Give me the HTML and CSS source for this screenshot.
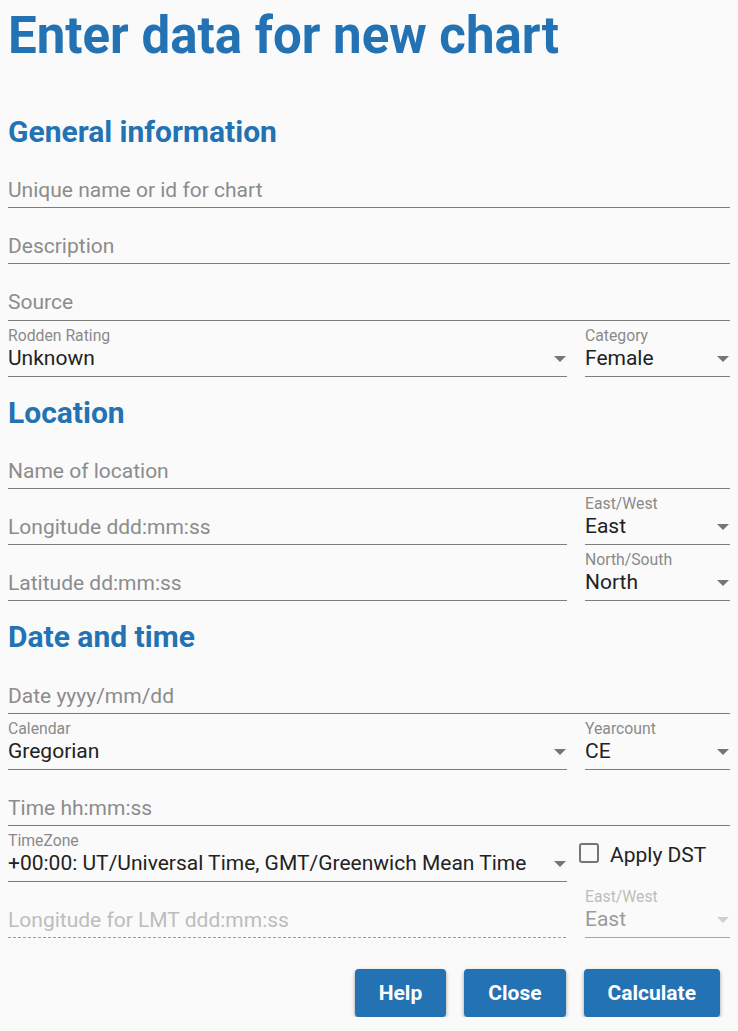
FILE: index.html
```html
<!DOCTYPE html>
<html lang="en">
<head>
<meta charset="utf-8">
<title>Enter data for new chart</title>
<link rel="stylesheet" href="styles.css">
</head>
<body>
<main class="page">
  <h1 class="title">Enter data for new chart</h1>

  <h2 class="section">General information</h2>
  <div class="field"><span class="placeholder">Unique name or id for chart</span></div>
  <div class="field"><span class="placeholder">Description</span></div>
  <div class="field"><span class="placeholder">Source</span></div>
  <div class="row">
    <div class="field select">
      <span class="label">Rodden Rating</span>
      <span class="value">Unknown</span>
      <svg class="arrow" width="12" height="6" viewBox="0 0 12 6"><path d="M0 0h12L6 6z"/></svg>
    </div>
    <div class="field select">
      <span class="label">Category</span>
      <span class="value">Female</span>
      <svg class="arrow" width="12" height="6" viewBox="0 0 12 6"><path d="M0 0h12L6 6z"/></svg>
    </div>
  </div>

  <h2 class="section">Location</h2>
  <div class="field"><span class="placeholder">Name of location</span></div>
  <div class="row">
    <div class="field"><span class="placeholder">Longitude ddd:mm:ss</span></div>
    <div class="field select">
      <span class="label">East/West</span>
      <span class="value">East</span>
      <svg class="arrow" width="12" height="6" viewBox="0 0 12 6"><path d="M0 0h12L6 6z"/></svg>
    </div>
  </div>
  <div class="row">
    <div class="field"><span class="placeholder">Latitude dd:mm:ss</span></div>
    <div class="field select">
      <span class="label">North/South</span>
      <span class="value">North</span>
      <svg class="arrow" width="12" height="6" viewBox="0 0 12 6"><path d="M0 0h12L6 6z"/></svg>
    </div>
  </div>

  <h2 class="section">Date and time</h2>
  <div class="field"><span class="placeholder">Date yyyy/mm/dd</span></div>
  <div class="row">
    <div class="field select">
      <span class="label">Calendar</span>
      <span class="value">Gregorian</span>
      <svg class="arrow" width="12" height="6" viewBox="0 0 12 6"><path d="M0 0h12L6 6z"/></svg>
    </div>
    <div class="field select">
      <span class="label">Yearcount</span>
      <span class="value">CE</span>
      <svg class="arrow" width="12" height="6" viewBox="0 0 12 6"><path d="M0 0h12L6 6z"/></svg>
    </div>
  </div>
  <div class="field"><span class="placeholder">Time hh:mm:ss</span></div>
  <div class="row">
    <div class="field select">
      <span class="label">TimeZone</span>
      <span class="value">+00:00: UT/Universal Time, GMT/Greenwich Mean Time</span>
      <svg class="arrow" width="12" height="6" viewBox="0 0 12 6"><path d="M0 0h12L6 6z"/></svg>
    </div>
    <label class="dst">
      <span class="checkbox"></span>
      <span class="dst-text">Apply DST</span>
    </label>
  </div>
  <div class="row">
    <div class="field disabled"><span class="placeholder">Longitude for LMT ddd:mm:ss</span></div>
    <div class="field select disabled">
      <span class="label">East/West</span>
      <span class="value">East</span>
      <svg class="arrow" width="12" height="6" viewBox="0 0 12 6"><path d="M0 0h12L6 6z"/></svg>
    </div>
  </div>

  <div class="actions">
    <button class="btn">Help</button>
    <button class="btn">Close</button>
    <button class="btn">Calculate</button>
  </div>
</main>
</body>
</html>
```

FILE: styles.css
```css
html, body {
  margin: 0;
  padding: 0;
  background: #fafafa;
}

body {
  font-family: Roboto, "Liberation Sans", Arial, sans-serif;
  color: #212121;
}

.page {
  padding: 0 8px;
}

.title {
  margin: 0;
  padding: 5px 0 29px;
  font-size: 51px;
  line-height: 62px;
  font-weight: 700;
  color: #2272b4;
}

.section {
  margin: 0;
  box-sizing: border-box;
  height: 56.17px;
  padding-top: 19px;
  font-size: 30px;
  line-height: 34px;
  font-weight: 700;
  color: #2272b4;
}

.field {
  box-sizing: border-box;
  height: 56.17px;
  padding-top: 25px;
  border-bottom: 1px solid #7c7c7c;
  min-width: 0;
}

.placeholder {
  display: block;
  font-size: 21px;
  line-height: 26px;
  color: #8c8c8c;
  white-space: nowrap;
}

.row {
  display: grid;
  grid-template-columns: 1fr 145px;
  column-gap: 18px;
}

.select {
  display: grid;
  grid-template-columns: 1fr auto;
  grid-template-rows: 17px 26px;
  row-gap: 1px;
  padding-top: 6px;
}

.select .label {
  grid-column: 1 / 3;
  font-size: 15.75px;
  line-height: 17px;
  color: #8a8a8a;
  white-space: nowrap;
}

.select .value {
  font-size: 21px;
  line-height: 26px;
  color: #222;
  white-space: nowrap;
  overflow: hidden;
}

.arrow {
  align-self: center;
  margin-top: 2px;
  margin-right: 1px;
  fill: #757575;
}

.dst {
  display: flex;
  align-items: flex-start;
  gap: 11px;
  padding-top: 16px;
  margin-left: -6px;
}

.checkbox {
  box-sizing: border-box;
  width: 20px;
  height: 20px;
  margin-top: 1px;
  border: 2px solid #757575;
  border-radius: 3px;
  flex: none;
}

.dst-text {
  font-size: 21px;
  line-height: 26px;
  color: #222;
}

.field.disabled {
  border-bottom: none;
  background-image: linear-gradient(to right, #9e9e9e 3px, transparent 3px);
  background-size: 5px 1px;
  background-repeat: repeat-x;
  background-position: left bottom;
}

.field.disabled .placeholder {
  color: #bdbdbd;
}

.field.select.disabled {
  background: none;
  border-bottom: 1px solid #a6a6a6;
}

.field.select.disabled .label {
  color: #bdbdbd;
}

.field.select.disabled .value {
  color: #9b9b9b;
}

.field.select.disabled .arrow {
  fill: #d0d0d0;
}

.actions {
  display: flex;
  justify-content: flex-end;
  gap: 18px;
  margin-top: 31px;
  padding-right: 10px;
}

.btn {
  height: 48px;
  padding: 0 24px;
  border: none;
  border-radius: 4px;
  background: #2272b4;
  color: #fff;
  font-family: Roboto, "Liberation Sans", Arial, sans-serif;
  font-size: 21px;
  font-weight: 700;
  box-shadow: 0 2px 4px rgba(0, 0, 0, 0.3), 0 1px 2px rgba(0, 0, 0, 0.15);
  cursor: pointer;
}
```
